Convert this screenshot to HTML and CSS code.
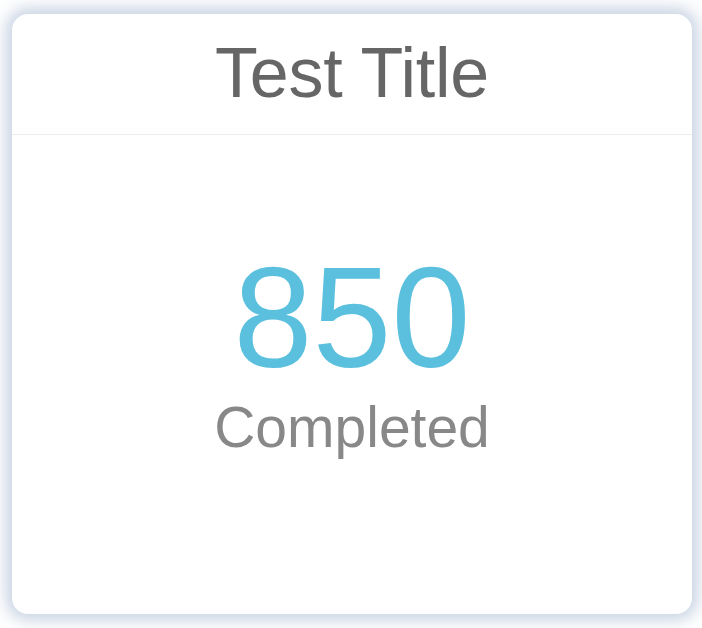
FILE: index.html
```html
<!DOCTYPE html>
<html>
<head>
<meta charset="utf-8">
<link rel="stylesheet" href="styles.css">
</head>
<body>
<div class="page">
  <div class="card">
    <div class="card-header">
      <h1 class="title">Test Title</h1>
    </div>
    <div class="card-body">
      <div class="value">850</div>
      <div class="label">Completed</div>
    </div>
  </div>
</div>
</body>
</html>
```
FILE: styles.css
```css
html, body {
  margin: 0;
  padding: 0;
  background: #ffffff;
}
body {
  font-family: "Liberation Sans", Arial, Helvetica, sans-serif;
}
.page {
  padding: 14px 10px 14px 12px;
}
.card {
  width: 680px;
  height: 600px;
  box-sizing: border-box;
  background: #ffffff;
  border-radius: 16px;
  box-shadow: 0 0 16px 6px rgba(165, 182, 208, 0.62);
  display: flex;
  flex-direction: column;
  overflow: hidden;
}
.card-header {
  height: 120px;
  border-bottom: 1px solid #ececec;
  display: flex;
  align-items: center;
  justify-content: center;
}
.title {
  margin: 0;
  font-size: 70px;
  line-height: 1;
  font-weight: normal;
  color: #666666;
  letter-spacing: -0.2px;
  padding-bottom: 2px;
}
.card-body {
  padding-top: 112px;
  display: flex;
  flex-direction: column;
  align-items: center;
}
.value {
  font-size: 142px;
  line-height: 1;
  color: #5bc0de;
}
.label {
  margin-top: 10px;
  font-size: 57px;
  line-height: 1;
  color: #888888;
}
```
